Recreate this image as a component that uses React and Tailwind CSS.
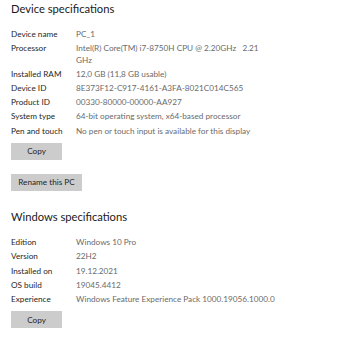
const deviceSpecs = [
  ["Device name", "PC_1"],
  ["Processor", "Intel(R) Core(TM) i7-8750H CPU @ 2.20GHz   2.21\nGHz"],
  ["Installed RAM", "12,0 GB (11,8 GB usable)"],
  ["Device ID", "8E373F12-C917-4161-A3FA-8021C014C565"],
  ["Product ID", "00330-80000-00000-AA927"],
  ["System type", "64-bit operating system, x64-based processor"],
  ["Pen and touch", "No pen or touch input is available for this display"],
];

const windowsSpecs = [
  ["Edition", "Windows 10 Pro"],
  ["Version", "22H2"],
  ["Installed on", "19.12.2021"],
  ["OS build", "19045.4412"],
  ["Experience", "Windows Feature Experience Pack 1000.19056.1000.0"],
];

const SpecTable = ({ rows }) => (
  <div className="flex flex-col gap-[2.7px]">
    {rows.map(([label, value]) => (
      <div key={label} className="flex text-[8.2px] leading-[11.5px]">
        <div className="w-[65px] shrink-0 text-[#1f1f1f]">{label}</div>
        <div className="w-[210px] whitespace-pre-wrap text-[#6b6b6b]">{value}</div>
      </div>
    ))}
  </div>
);

const GrayButton = ({ children, width }) => (
  <button
    className={`flex h-[17px] items-center justify-center whitespace-nowrap bg-[#cccccc] text-[8.2px] text-[#1f1f1f] ${width}`}
  >
    {children}
  </button>
);

export default function App() {
  return (
    <div
      className="w-[339px] h-[340px] bg-white px-[11px] pt-[1px] overflow-hidden"
      style={{ fontFamily: 'Lato, "Noto Sans", sans-serif' }}
    >
      <h2 className="text-[11.2px] leading-[16px] text-[#1a1a1a] mb-[12px]">Device specifications</h2>
      <SpecTable rows={deviceSpecs} />
      <div className="mt-[6px]">
        <GrayButton width="w-[51px]">Copy</GrayButton>
      </div>
      <div className="mt-[14px]">
        <GrayButton width="w-[71px]">Rename this PC</GrayButton>
      </div>
      <h2 className="mt-[18px] text-[11.2px] leading-[16px] text-[#1a1a1a] mb-[12px]">Windows specifications</h2>
      <SpecTable rows={windowsSpecs} />
      <div className="mt-[6px]">
        <GrayButton width="w-[51px]">Copy</GrayButton>
      </div>
    </div>
  );
}
